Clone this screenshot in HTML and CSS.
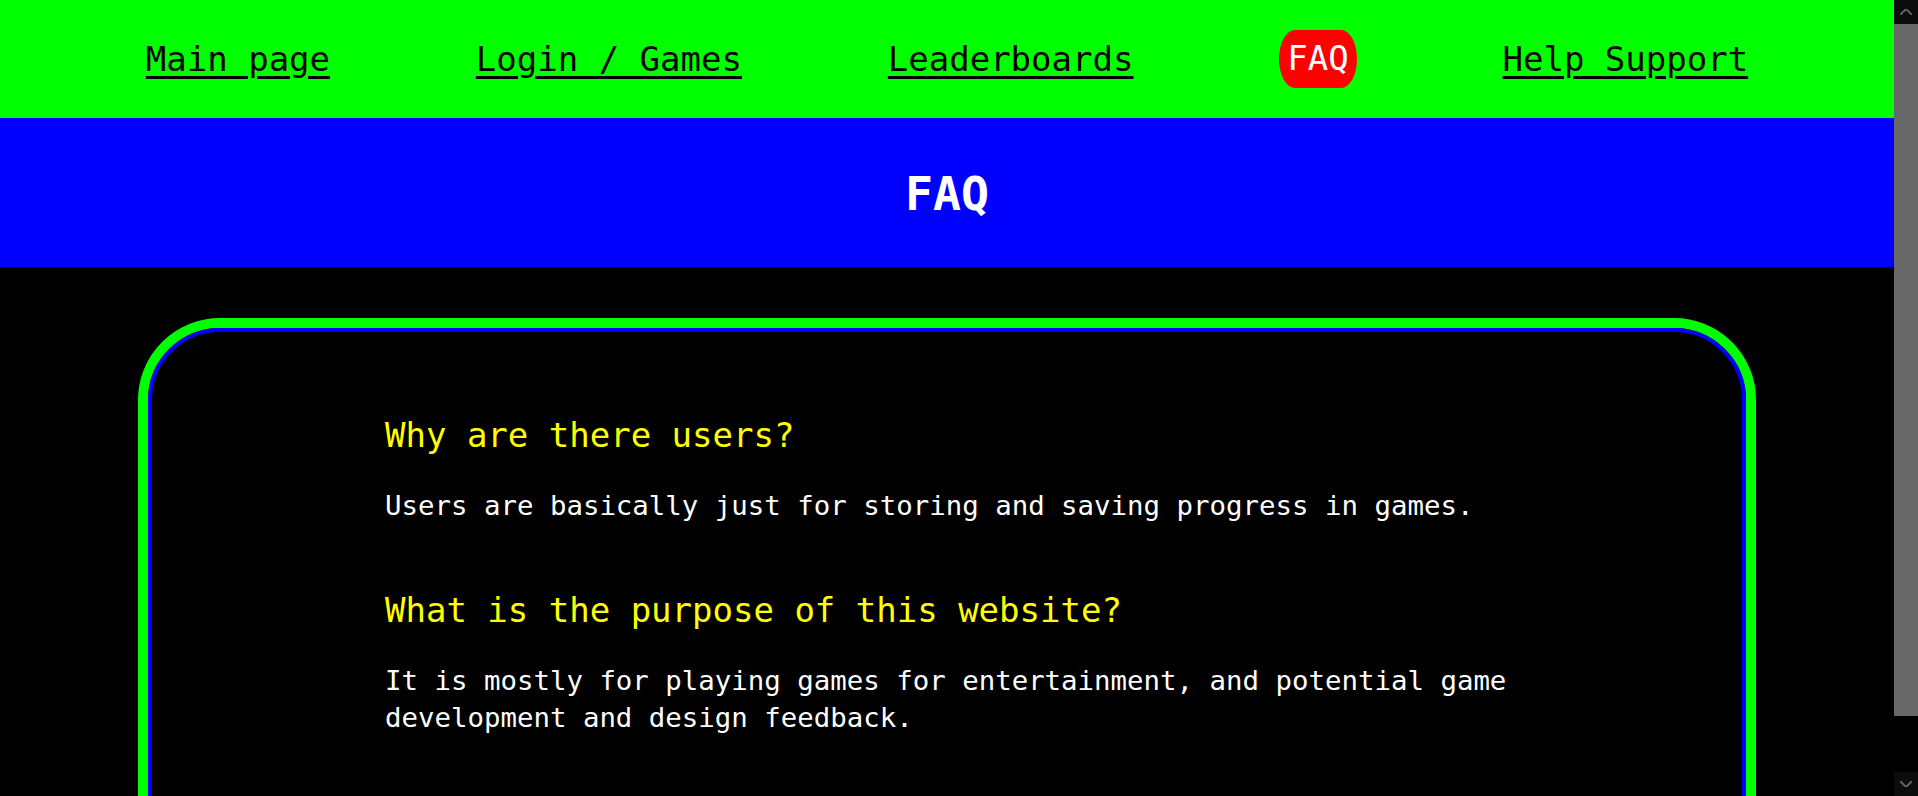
FILE: index.html
```html
<!DOCTYPE html>
<html lang="en">
<head>
<meta charset="utf-8">
<title>FAQ</title>
<link rel="stylesheet" href="styles.css">
</head>
<body>
<div class="app">
  <div class="page">
    <nav class="nav">
      <a class="nav-link" href="#">Main page</a>
      <a class="nav-link" href="#">Login / Games</a>
      <a class="nav-link" href="#">Leaderboards</a>
      <span class="nav-active">FAQ</span>
      <a class="nav-link" href="#">Help Support</a>
    </nav>
    <header class="banner">
      <h1 class="banner-title">FAQ</h1>
    </header>
    <main class="card">
      <div class="card-inner">
        <section class="qa">
          <h2 class="qa-q">Why are there users?</h2>
          <p class="qa-a">Users are basically just for storing and saving progress in games.</p>
        </section>
        <section class="qa">
          <h2 class="qa-q">What is the purpose of this website?</h2>
          <p class="qa-a">It is mostly for playing games for entertainment, and potential game development and design feedback.</p>
        </section>
      </div>
    </main>
  </div>
  <div class="scrollbar">
    <div class="sb-btn sb-up"></div>
    <div class="sb-thumb"></div>
    <div class="sb-track"></div>
    <div class="sb-btn sb-down"></div>
  </div>
</div>
</body>
</html>
```
FILE: styles.css
```css
html, body {
  margin: 0;
  padding: 0;
  background: #000;
  overflow: hidden;
}

body {
  font-family: "DejaVu Sans Mono", "Liberation Mono", monospace;
  color: #fff;
}

.app {
  display: flex;
  height: 100vh;
  overflow: hidden;
}

.page {
  flex: 1;
  min-width: 0;
  overflow: hidden;
}

/* NAV */
.nav {
  height: 118px;
  background: #00ff00;
  display: flex;
  align-items: center;
  justify-content: space-evenly;
  font-size: 34px;
}

.nav-link {
  color: #000;
  text-decoration: underline;
  text-decoration-thickness: 3px;
  text-underline-offset: 5px;
  line-height: 41px;
}

.nav-active {
  background: #ff0000;
  color: #fff;
  padding: 8px 8px 9px;
  line-height: 41px;
  border-radius: 16px / 50%;
}

/* BANNER */
.banner {
  height: 149px;
  background: #0000ff;
  display: flex;
  align-items: center;
  justify-content: center;
}

.banner-title {
  margin: 0;
  font-size: 46.5px;
  font-weight: bold;
  color: #fff;
  line-height: 54px;
  padding-top: 2px;
}

/* CARD */
.card {
  display: block;
  margin: 51px 138px 30px;
  border: 10px solid #00ff00;
  border-radius: 82px;
}

.card-inner {
  border: 4px solid #0000ff;
  border-radius: 72px;
  padding: 83px 200px 150px 233px;
  display: flex;
  flex-direction: column;
  gap: 66px;
}

.qa-q {
  margin: 0 0 31px;
  color: #ffff00;
  font-size: 34px;
  font-weight: normal;
  line-height: 41px;
}

.qa-a {
  margin: 0;
  color: #fff;
  font-size: 27.4px;
  line-height: 37px;
}

/* SCROLLBAR */
.scrollbar {
  width: 24px;
  flex: 0 0 24px;
  display: flex;
  flex-direction: column;
  background: #000;
}

.sb-btn {
  height: 24px;
  flex: 0 0 24px;
  background-color: #0c0c0c;
  background-repeat: no-repeat;
}

.sb-up {
  background-image:
    linear-gradient(to bottom right, transparent 38%, #5c5c5c 38%, #5c5c5c 64%, transparent 64%),
    linear-gradient(to bottom left, transparent 38%, #5c5c5c 38%, #5c5c5c 64%, transparent 64%);
  background-size: 6px 6px, 6px 6px;
  background-position: 6px 9px, 12px 9px;
}

.sb-down {
  background-image:
    linear-gradient(to top right, transparent 38%, #5c5c5c 38%, #5c5c5c 64%, transparent 64%),
    linear-gradient(to top left, transparent 38%, #5c5c5c 38%, #5c5c5c 64%, transparent 64%);
  background-size: 6px 6px, 6px 6px;
  background-position: 6px 9px, 12px 9px;
}

.sb-thumb {
  height: 692px;
  flex: 0 0 692px;
  background: #676767;
}

.sb-track {
  flex: 1;
  background: #000;
}
```
